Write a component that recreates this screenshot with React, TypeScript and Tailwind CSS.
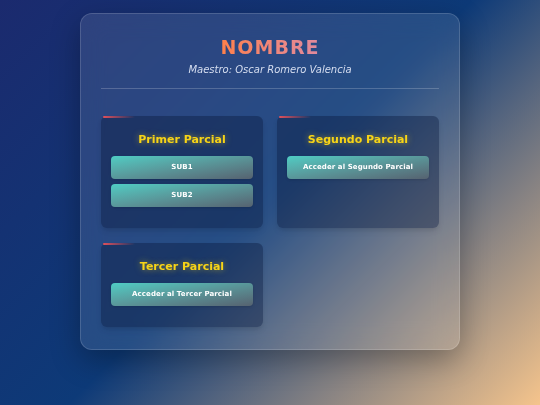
const FONT = { fontFamily: '"DejaVu Sans", Verdana, sans-serif' }

function Card({ title, buttons }: { title: string; buttons: string[] }) {
  return (
    <div className="relative rounded-md bg-[#0a1a3c]/40 px-[10px] pt-[16px] pb-[21px] shadow-md">
      <div className="absolute left-[2px] top-0 h-[2px] w-[32px] rounded-full bg-gradient-to-r from-[#e0505a] to-transparent" />
      <h3 className="mb-[8px] text-center text-[11px] font-bold leading-[16px] text-[#f7d417] [text-shadow:0_0_6px_rgba(247,212,23,0.55)]">
        {title}
      </h3>
      <div className="flex flex-col gap-[5px]">
        {buttons.map(b => (
          <button
            key={b}
            className="h-[23px] w-full rounded-[4px] bg-gradient-to-br from-[#4ecdc4] to-[#556270] text-[7px] font-bold tracking-[0.1px] text-white shadow-sm"
          >
            {b}
          </button>
        ))}
      </div>
    </div>
  )
}

export default function App() {
  return (
    <div
      className="min-h-[405px] w-full bg-[linear-gradient(135deg,#1b2a6e_0%,#0d3a78_50%,#f5c48c_100%)] pt-[13px]"
      style={FONT}
    >
      <div className="mx-auto w-[380px] rounded-xl border border-white/15 bg-white/10 px-[20px] pt-[21px] pb-[22px] shadow-[0_10px_30px_rgba(0,0,0,0.3)] backdrop-blur-md">
        <div className="text-center leading-[24px]">
          <h1 className="inline-block bg-gradient-to-r from-[#ff8048] to-[#e08a9e] bg-clip-text text-[19px] font-bold tracking-[1px] text-transparent">
            NOMBRE
          </h1>
        </div>
        <p className="mt-[2px] text-center text-[10px] italic leading-[14px] text-[#d6def0]">
          Maestro: Oscar Romero Valencia
        </p>
        <div className="mt-[11px] h-px bg-white/20" />
        <div className="mt-[27px] grid grid-cols-2 gap-x-[14px] gap-y-[15px]">
          <Card title="Primer Parcial" buttons={['SUB1', 'SUB2']} />
          <Card title="Segundo Parcial" buttons={['Acceder al Segundo Parcial']} />
          <Card title="Tercer Parcial" buttons={['Acceder al Tercer Parcial']} />
        </div>
      </div>
    </div>
  )
}
